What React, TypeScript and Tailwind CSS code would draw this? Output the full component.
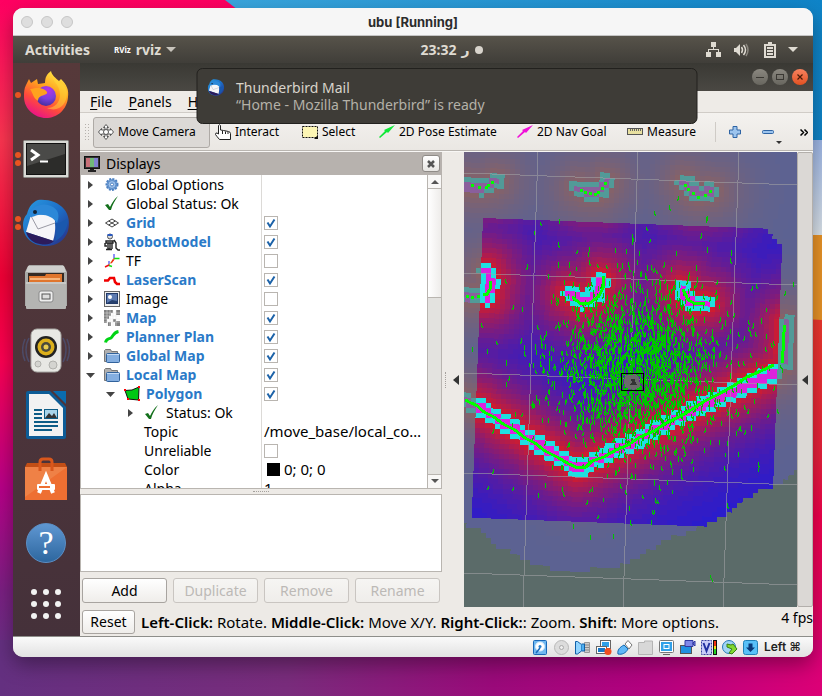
import React from "react";

type Pt = [number, number];

/* ---------- costmap view ---------- */

const WALLS: Pt[][] = [
  [[2, 34], [18, 35], [26, 33], [32, 29]],
  [[115, 36], [123, 40], [132, 41], [137, 37], [142, 30]],
  [[221, 30], [226, 37], [235, 42], [247, 39]],
  [[22, 119], [27, 130], [23, 146]],
  [[106, 142], [119, 150], [133, 142], [137, 128]],
  [[218, 137], [223, 147], [232, 152], [242, 151]],
  [[0, 248], [16, 256], [63, 285], [114, 317], [163, 293], [229, 258], [309, 221]],
  [[323, 172], [322, 210]],
  [[1, 144], [14, 144]],
];

const FRONTIER: Pt[] = [
  [-20, 368], [0, 371], [20, 381], [36, 396], [60, 406], [74, 414], [101, 420], [121, 420], [126, 416],
  [151, 415], [176, 406], [191, 394], [216, 383], [238, 374], [262, 363], [276, 351], [300, 337],
  [313, 333], [333, 317], [360, 300],
];

const SCANS: string[] = [
  "M1 248l6 3 5 2 8 7 10 5 9 7 12 6 10 8 10 5 10 8 12 6 12 7 9 4 8-1 6-6 12-4 12-7 12-5 12-8 14-6 12-8 13-6 12-7 14-9 14-7 14-8 14-9 14-6 13-6",
  "M108 145l8 6 10 0 9-7 4-8 0-12",
  "M219 137l5 11 8 4 9-1",
  "M27 129l-1 8-4 7",
  "M321 173l-2 14 0 12-1 12",
];

const DOTS: Pt[] = [
  [8, 33], [15, 35], [22, 35], [24, 33], [28, 30], [117, 38], [121, 40], [126, 41], [131, 42], [134, 40], [138, 36],
  [141, 31], [221, 33], [224, 37], [229, 41], [234, 45], [241, 43], [246, 39], [3, 144], [8, 145], [14, 144], [2, 248], [20, 142],
];

function segmentDistance(x: number, y: number, a: Pt, b: Pt) {
  const dx = b[0] - a[0];
  const dy = b[1] - a[1];
  const t = Math.max(0, Math.min(1, ((x - a[0]) * dx + (y - a[1]) * dy) / (dx * dx + dy * dy)));
  return Math.hypot(x - a[0] - t * dx, y - a[1] - t * dy);
}

function wallDistance(x: number, y: number) {
  let best = 999;
  for (const w of WALLS) {
    for (let i = 1; i < w.length; i++) best = Math.min(best, segmentDistance(x, y, w[i - 1], w[i]));
  }
  return best;
}

function frontierY(x: number) {
  for (let i = 1; i < FRONTIER.length; i++) {
    const a = FRONTIER[i - 1];
    const b = FRONTIER[i];
    if (x <= b[0]) return a[1] + ((x - a[0]) / (b[0] - a[0])) * (b[1] - a[1]);
  }
  return 300;
}

const LEVELS = 28;
const CELL = 5;
const ANGLE = 2.15;

function mix(a: number[], b: number[], t: number) {
  return "rgb(" + a.map((v, i) => Math.round(v + (b[i] - v) * t)).join(",") + ")";
}

function buildCells() {
  const paths: Record<string, string> = {};
  const c = Math.cos((ANGLE * Math.PI) / 180);
  const s = Math.sin((ANGLE * Math.PI) / 180);
  for (let i = -8; i < 66; i++) {
    for (let j = -18; j < 76; j++) {
      const u = (i + 0.5) * CELL;
      const v = (j + 0.5) * CELL;
      const x = 19 + u * c - v * s;
      const y = 66 + u * s + v * c;
      if (y > frontierY(x)) continue;
      const corner = i > 59 - Math.max(0, 3 - j);
      const local = i >= 0 && i < 60 && j >= 0 && j < 60 && !corner;
      const d = wallDistance(x, y);
      let fill: string;
      if (d < 4) fill = local ? "#dc22dc" : "#8a5f9c";
      else if (d < 8.5) fill = local ? "#1fe0e0" : "#529a98";
      else {
        const spread = local ? 38 : 26;
        const t = Math.round(Math.exp(-(d - 8.5) / spread) * LEVELS) / LEVELS;
        fill = local ? mix([30, 28, 216], [206, 28, 48], t) : mix([90, 98, 148], [134, 98, 104], t);
      }
      paths[fill] = (paths[fill] || "") + `M${i * CELL} ${j * CELL}h5v5h-5z`;
    }
  }
  return Object.entries(paths);
}

function buildParticles() {
  let seed = 20231;
  const rnd = () => {
    seed = (seed * 1664525 + 1013904223) % 4294967296;
    return seed / 4294967296;
  };
  const gauss = () => Math.sqrt(-2 * Math.log(rnd() + 1e-9)) * Math.cos(2 * Math.PI * rnd());
  let d = "";
  for (let i = 0; i < 2500; i++) {
    const wide = i % 4 === 0;
    const x = Math.round(174 + gauss() * (wide ? 62 : 37)) + 0.5;
    const y = Math.round(214 + gauss() * (wide ? 64 : 38));
    const lean = Math.round(rnd() * 2 - 1);
    const len = 2 + Math.round(rnd() * 2);
    if (x < 4 || x > 330 || y < 40) continue;
    d += `M${x} ${y}v${len}h${lean}v2`;
  }
  return d;
}

const CELLS = buildCells();
const PARTICLES = buildParticles();

function MapView() {
  return (
    <svg
      viewBox="0 0 333 455"
      preserveAspectRatio="xMidYMid slice"
      shapeRendering="crispEdges"
      className="block h-full min-w-0 flex-1 bg-[#5b6b69]"
      role="img"
      aria-label="Robot costmap view"
    >
      <g transform={`translate(19 66) rotate(${ANGLE})`}>
        {CELLS.map(([fill, d]) => (
          <path key={fill} d={d} fill={fill} />
        ))}
      </g>
      <path
        d="M74 0L59 455M174 0L159 455M275 0L259 455M0 21L333 33M0 121L333 133M0 221L333 233M0 321L333 333M0 421L333 433"
        stroke="#a0a0a4"
        strokeOpacity="0.6"
        fill="none"
      />
      <path d={PARTICLES} stroke="#00c400" fill="none" />
      {SCANS.map((d) => (
        <path key={d} d={d} stroke="#00ff00" strokeWidth="3" fill="none" />
      ))}
      {DOTS.map(([x, y]) => (
        <rect key={x + "-" + y} x={x - 1} y={y - 1} width="3" height="3" fill="#00ff00" />
      ))}
      <path d="M161 223h7l2-2 5 4 1 10-6 3-8-2-2-5z" fill="#6a6a6a" />
      <path d="M167 227h4v2l2 4h-7l2-3z" fill="#333" />
      <rect x="157.500" y="221.500" width="22" height="17" fill="none" stroke="#000" />
      <path d="M246 423l1 3 2 4" stroke="#00c400" fill="none" />
    </svg>
  );
}

/* ---------- wallpaper ---------- */

function Wallpaper() {
  return (
    <svg className="absolute inset-0 h-full w-full" viewBox="0 0 822 696" preserveAspectRatio="none" aria-hidden="true">
      <defs>
        <linearGradient id="wl" x1="0" y1="0" x2="0" y2="1">
          <stop offset="0" stopColor="#ff0062" />
          <stop offset="0.2" stopColor="#fb3550" />
          <stop offset="0.4" stopColor="#f00036" />
          <stop offset="0.52" stopColor="#fb0052" />
          <stop offset="0.7" stopColor="#b80088" />
          <stop offset="0.85" stopColor="#7a2082" />
          <stop offset="1" stopColor="#5b3a84" />
        </linearGradient>
        <linearGradient id="wb" x1="0" y1="0" x2="1" y2="0">
          <stop offset="0" stopColor="#643080" />
          <stop offset="0.35" stopColor="#792c7c" />
          <stop offset="0.6" stopColor="#9a0a7a" />
          <stop offset="0.8" stopColor="#b4007e" />
          <stop offset="1" stopColor="#dc0076" />
        </linearGradient>
        <linearGradient id="wt" x1="0" y1="0" x2="1" y2="0">
          <stop offset="0" stopColor="#3aa6de" />
          <stop offset="1" stopColor="#0f84c8" />
        </linearGradient>
        <linearGradient id="ws" x1="0" y1="0" x2="0" y2="1">
          <stop offset="0" stopColor="#9db6e6" />
          <stop offset="1" stopColor="#dfe6ea" />
        </linearGradient>
        <linearGradient id="wr" x1="0" y1="0" x2="0" y2="1">
          <stop offset="0" stopColor="#ef3c2c" />
          <stop offset="0.4" stopColor="#e8203c" />
          <stop offset="0.55" stopColor="#f2004e" />
          <stop offset="1" stopColor="#dc0076" />
        </linearGradient>
      </defs>
      <rect width="822" height="696" fill="url(#wl)" />
      <path d="M225 0H822V150H420Z" fill="url(#wt)" />
      <rect x="500" y="140" width="322" height="100" fill="url(#ws)" />
      <rect x="500" y="235" width="322" height="85" fill="#e99327" />
      <path d="M500 300L822 320V696H500Z" fill="url(#wr)" />
      <rect y="640" width="822" height="56" fill="url(#wb)" />
    </svg>
  );
}

/* ---------- dock ---------- */

function Firefox() {
  return (
    <svg width="46" height="48" viewBox="0 0 46 48">
      <defs>
        <linearGradient id="ff" x1="0.8" y1="0" x2="0.3" y2="1">
          <stop offset="0" stopColor="#fff04a" />
          <stop offset="0.4" stopColor="#ffa01e" />
          <stop offset="0.7" stopColor="#ff4a3c" />
          <stop offset="1" stopColor="#e8108c" />
        </linearGradient>
        <radialGradient id="fg" cx="0.6" cy="0.2" r="0.9">
          <stop offset="0" stopColor="#b833e8" />
          <stop offset="0.5" stopColor="#7a40dc" />
          <stop offset="1" stopColor="#3c2a90" />
        </radialGradient>
      </defs>
      <path d="M3 14l3-6 2 4 6-4 1 5 7-1c0-6 2-9 6-12 1 5 5 7 8 10l2-2c6 6 8 11 7 18-1 13-11 21-22 21S1 38 1 26c0-5 0-8 2-12z" fill="url(#ff)" />
      <path d="M29 3c-1 7 8 10 8 21 0 7-5 13-13 13 12 5 20-4 20-15 0-10-12-11-15-19z" fill="#ffd93a" opacity=".5" />
      <circle cx="23" cy="25" r="10" fill="url(#fg)" />
      <path d="M7 18c6-1 10-2 15 1 3 2 3 4-1 5-3 1-6 2-6 6-5-3-5-8-8-12z" fill="#ffa21e" />
    </svg>
  );
}

function Terminal() {
  return (
    <svg width="46" height="38" viewBox="0 0 46 38">
      <rect x="0.500" y="0.500" width="45" height="37" rx="1" fill="#d9d9d5" stroke="#8a8a86" />
      <rect x="3.500" y="3.500" width="39" height="31" fill="#2c2c2a" stroke="#111" />
      <path d="M4 4h38v10L4 26z" fill="#4a4a48" />
      <path d="M8 10l7 5-7 5" fill="none" stroke="#fff" strokeWidth="3" />
      <path d="M17 21.500h8" stroke="#fff" strokeWidth="2" />
    </svg>
  );
}

function Thunderbird({ size }: { size: number }) {
  return (
    <svg width={size} height={size} viewBox="0 0 48 48">
      <defs>
        <linearGradient id="tb" x1="0" y1="0" x2="1" y2="1">
          <stop offset="0" stopColor="#2a9be0" />
          <stop offset="0.5" stopColor="#1c6ec8" />
          <stop offset="1" stopColor="#2a2a80" />
        </linearGradient>
      </defs>
      <path d="M16 1c10-1 20 2 26 9 5 6 6 14 4 22-3 9-11 15-22 15C10 47 1 38 1 26c0-4 1-8 4-11 2-8 6-12 11-14z" fill="url(#tb)" />
      <path d="M9 16l22-1c3 6 3 17 0 27L4 33z" fill="#f6f6f8" />
      <path d="M9 17l7 13 17-6" fill="none" stroke="#9a9aa4" />
      <path d="M4 33l28 9c-4 4-9 4-14 3C11 44 6 40 4 33z" fill="#2c1c5c" />
      <path d="M7 16c2-9 15-14 24-8 7 4 6 11 4 16-4-6-11-9-19-8-4 1-8 4-9 0z" fill="#2c88d8" />
      <path d="M33 24c6 1 10-4 13-4 0 8-4 18-13 22 1-6 2-12 0-18z" fill="#1a58ae" />
      <circle cx="13" cy="13" r="2" fill="#123" />
    </svg>
  );
}

function Files() {
  return (
    <svg width="44" height="46" viewBox="0 0 44 46">
      <path d="M3 4l2-3h34l2 3 2 4v34H1V8z" fill="#a9a9a7" />
      <path d="M4 2h36l2 6H2z" fill="#cfcfcd" />
      <rect x="4" y="9" width="36" height="10" fill="#352a24" />
      <path d="M5 12h16l1-2h16v8H5z" fill="#e0762e" />
      <path d="M6 14h30v2H6z" fill="#f7b57c" />
      <rect x="2" y="18" width="40" height="27" rx="1" fill="#b4b4b2" />
      <path d="M2 19h40" stroke="#dcdcda" />
      <rect x="15" y="27" width="14" height="11" rx="2" fill="#eee" stroke="#888" />
      <rect x="18" y="30" width="8" height="5" fill="#ddd" stroke="#555" />
    </svg>
  );
}

function Rhythmbox() {
  return (
    <svg width="48" height="46" viewBox="0 0 48 46">
      <path d="M7 10c-4 7-4 17 0 24M3 11c-3 7-3 15 0 22M41 10c4 7 4 17 0 24M45 11c3 7 3 15 0 22" fill="none" stroke="#4c4a66" strokeWidth="1.500" />
      <rect x="9" y="1" width="30" height="43" rx="6" fill="#e8e8e4" stroke="#a8a8a4" />
      <circle cx="24" cy="19" r="11" fill="#222" />
      <circle cx="24" cy="19" r="8.500" fill="#dcb01c" />
      <circle cx="24" cy="19" r="5" fill="#4a4a3c" />
      <circle cx="24" cy="19" r="2.500" fill="#e8cc50" />
      <circle cx="16" cy="36" r="3" fill="#d4d4d0" stroke="#b0b0ac" />
      <circle cx="31" cy="37" r="4" fill="#d4d4d0" stroke="#b0b0ac" />
    </svg>
  );
}

function Writer() {
  return (
    <svg width="40" height="48" viewBox="0 0 40 48">
      <path d="M2 0h22l16 16v30a2 2 0 0 1-2 2H2a2 2 0 0 1-2-2V2a2 2 0 0 1 2-2z" fill="#0d5c96" />
      <path d="M27 0h13v13z" fill="#0a6cae" />
      <path d="M3 3h20l14 14v28H3z" fill="#f2f2f2" />
      <path d="M8 19h8M8 23h8M8 27h8M8 31h24M8 35h24M8 39h18" stroke="#0d5c86" strokeWidth="2" />
      <rect x="18.500" y="18.500" width="13" height="9" fill="#a8d4ea" stroke="#0d5c86" />
      <path d="M19 27l4-5 3 3 2-3 3 5z" fill="#333" />
    </svg>
  );
}

function Software() {
  return (
    <svg width="42" height="44" viewBox="0 0 42 44">
      <path d="M2 6h38l2 4H0z" fill="#c24e16" />
      <path d="M0 10h42v33H0z" fill="#ee6f32" />
      <path d="M0 10h42L0 40z" fill="#f0894e" opacity=".7" />
      <path d="M15 14V5q0-3 3-3h6q3 0 3 3v9" fill="none" stroke="#d9571c" strokeWidth="3" />
      <path d="M14 36l7-17 7 17" fill="none" stroke="#fff" strokeWidth="4" />
      <rect x="12" y="27" width="18" height="6" rx="1" fill="#fff" />
      <rect x="14" y="29" width="11" height="2" fill="#ee6f32" />
    </svg>
  );
}

function Help() {
  return (
    <span className="flex h-10 w-10 items-center justify-center rounded-full border border-[#5b8fc6] bg-linear-to-b from-[#5f97d2] to-[#2d679f] font-['Liberation_Serif',serif] text-[34px] leading-10 text-white">
      ?
    </span>
  );
}

function AppsGrid() {
  return (
    <svg width="30" height="30" viewBox="0 0 30 30" fill="#f2f2f2">
      {[3, 15, 27].map((y) => [3, 15, 27].map((x) => <circle key={x + "," + y} cx={x} cy={y} r="3" />))}
    </svg>
  );
}

const DOCK = [
  { label: "Firefox", icon: <Firefox />, open: 1 },
  { label: "Terminal", icon: <Terminal />, open: 2 },
  { label: "Thunderbird", icon: <Thunderbird size={48} />, open: 2 },
  { label: "Files", icon: <Files />, open: 0 },
  { label: "Rhythmbox", icon: <Rhythmbox />, open: 0 },
  { label: "LibreOffice Writer", icon: <Writer />, open: 0 },
  { label: "Ubuntu Software", icon: <Software />, open: 0 },
  { label: "Help", icon: <Help />, open: 0 },
];

function Dock() {
  return (
    <nav aria-label="Dock" className="flex w-[67px] shrink-0 flex-col bg-linear-to-b from-[#56393a] to-[#45313a]">
      {DOCK.map((d) => (
        <button key={d.label} aria-label={d.label} className="flex h-16 shrink-0 items-center">
          <span className="flex w-2 flex-col items-end gap-[2px]">
            {Array.from({ length: d.open }, (_, i) => (
              <span key={i} className="h-[6px] w-[6px] rounded-full bg-[#e95420]" />
            ))}
          </span>
          <span className="ml-px flex w-12 justify-center">{d.icon}</span>
        </button>
      ))}
      <button aria-label="Show Applications" className="flex h-[58px] items-center pl-[18px]">
        <AppsGrid />
      </button>
    </nav>
  );
}

/* ---------- displays tree ---------- */

const IconGear = () => (
  <svg width="16" height="16" viewBox="0 0 16 16">
    <circle cx="8" cy="7.500" r="5.500" fill="#7aa6dc" stroke="#4d80c0" strokeWidth="2" strokeDasharray="2 1.200" />
    <circle cx="8" cy="7.500" r="4" fill="#9cc0ea" stroke="#5a8cc8" />
    <circle cx="8" cy="7.500" r="1.500" fill="#fff" stroke="#4d80c0" />
  </svg>
);
const IconOk = () => (
  <svg width="16" height="16" viewBox="0 0 16 16">
    <path d="M1 9l3-1 2 3c2-4 4-8 8-11-3 5-6 9-7 14H5z" fill="#14701c" />
  </svg>
);
const IconGrid = () => (
  <svg width="16" height="16" viewBox="0 0 16 16" fill="none" stroke="#444">
    <path d="M1.500 8L8 4l6.500 4L8 12zM4.700 6l6.600 4M11.300 6l-6.600 4" />
  </svg>
);
const IconRobot = () => (
  <svg width="16" height="18" viewBox="0 0 16 18">
    <circle cx="6" cy="3.500" r="2.500" fill="#ddd" stroke="#555" />
    <path d="M3.500 2h5" stroke="#2a5ac0" strokeWidth="2" />
    <path d="M2 8h7v2H2zM1 10v3h2M4 10v6h2v-6M8 10v6M2 16.500h6M10 7l2 3v5l2 2h2" fill="none" stroke="#222" strokeWidth="1.400" />
  </svg>
);
const IconTf = () => (
  <svg width="16" height="16" viewBox="0 0 16 16" fill="none">
    <path d="M10 1v5M5 8v4" stroke="#2020f0" />
    <path d="M10 5.500h5.500M5 12.500l3 1" stroke="#10e010" strokeWidth="1.500" />
    <path d="M10 6l-3 4M5 12l-4 2" stroke="#f01010" strokeWidth="1.500" />
    <path d="M10 5.500l-5 6.500" stroke="#e0a020" strokeDasharray="2 1" />
  </svg>
);
const IconLaser = () => (
  <svg width="16" height="16" viewBox="0 0 16 16">
    <path d="M0 8.500h4l2-2.500h4l1 4 2 2h3" fill="none" stroke="#f00000" strokeWidth="2.500" />
  </svg>
);
const IconImage = () => (
  <svg width="16" height="16" viewBox="0 0 16 16">
    <rect x="0.500" y="0.500" width="15" height="15" fill="#eee" stroke="#666" />
    <rect x="2.500" y="2.500" width="11" height="10" fill="#5c7ab0" stroke="#223a68" />
    <circle cx="6" cy="6" r="2" fill="#fff" />
    <path d="M3 12l5-3 5 1v2z" fill="#26406e" />
  </svg>
);
const IconMap = () => (
  <svg width="16" height="16" viewBox="0 0 16 16">
    <path d="M0 0h9v3H7v3H5v3H3v4H0zM12 0h4v5h-4zM9 9h3v2h4v5h-5v-4H9zM4 12h3v4H4z" fill="#808080" />
    <path d="M0 3h16M0 6h16M0 9h16M0 12h16M3 0v16M6 0v16M9 0v16M12 0v16" stroke="#e4e4e4" strokeWidth=".5" />
  </svg>
);
const IconPlan = () => (
  <svg width="16" height="16" viewBox="0 0 16 16">
    <path d="M1.500 13.500c1-5 4-3 6-5s2-5 7-6" fill="none" stroke="#00d414" strokeWidth="3" />
  </svg>
);
const IconFolder = () => (
  <svg width="16" height="16" viewBox="0 0 16 16">
    <path d="M.5 13.500V2.500l1-1h5l1 2h6v10z" fill="#b0b0b0" stroke="#777" />
    <rect x="2.500" y="5.500" width="13" height="9" rx="1" fill="#84aee0" stroke="#31629c" />
    <path d="M3 6.500h12" stroke="#c4daf4" />
  </svg>
);
const IconPolygon = () => (
  <svg width="16" height="16" viewBox="0 0 16 16">
    <path d="M1 4.500l7-.5 7-3-.5 13L4 13z" fill="#00c814" stroke="#111" />
    <path d="M0 3h2v2H0zM14 0h2v2h-2zM14 13h2v2h-2zM3 12h2v2H3z" fill="#f00" />
  </svg>
);

type Row = {
  name: string;
  icon?: React.ReactNode;
  depth: 0 | 1 | 2 | 3;
  open?: boolean;
  bold?: boolean;
  check?: boolean;
  value?: React.ReactNode;
};

const ROWS: Row[] = [
  { name: "Global Options", icon: <IconGear />, depth: 0 },
  { name: "Global Status: Ok", icon: <IconOk />, depth: 0 },
  { name: "Grid", icon: <IconGrid />, depth: 0, bold: true, check: true },
  { name: "RobotModel", icon: <IconRobot />, depth: 0, bold: true, check: true },
  { name: "TF", icon: <IconTf />, depth: 0, check: false },
  { name: "LaserScan", icon: <IconLaser />, depth: 0, bold: true, check: true },
  { name: "Image", icon: <IconImage />, depth: 0, check: false },
  { name: "Map", icon: <IconMap />, depth: 0, bold: true, check: true },
  { name: "Planner Plan", icon: <IconPlan />, depth: 0, bold: true, check: true },
  { name: "Global Map", icon: <IconFolder />, depth: 0, bold: true, check: true },
  { name: "Local Map", icon: <IconFolder />, depth: 0, open: true, bold: true, check: true },
  { name: "Polygon", icon: <IconPolygon />, depth: 1, open: true, bold: true, check: true },
  { name: "Status: Ok", icon: <IconOk />, depth: 2 },
  { name: "Topic", depth: 3, value: "/move_base/local_co…" },
  { name: "Unreliable", depth: 3, check: false },
  {
    name: "Color",
    depth: 3,
    value: (
      <span className="flex items-center gap-1 pl-[3px]">
        <span className="h-[13px] w-[13px] bg-black" />
        0; 0; 0
      </span>
    ),
  },
  { name: "Alpha", depth: 3, value: "1" },
];

const INDENT = { 0: "pl-[5px]", 1: "pl-[25px]", 2: "pl-[45px]", 3: "pl-[63px]" };

function Twisty({ open }: { open?: boolean }) {
  return (
    <svg width="10" height="10" viewBox="0 0 10 10" fill="#444" className="shrink-0">
      {open ? <path d="M0 3h9L4.500 8z" /> : <path d="M2 1v8l5-4z" />}
    </svg>
  );
}

function Check({ label, checked }: { label: string; checked: boolean }) {
  return (
    <label className="relative block h-[14px] w-[14px]">
      <input
        type="checkbox"
        aria-label={label}
        defaultChecked={checked}
        className="peer block h-[14px] w-[14px] appearance-none border border-[#b9b5b0] bg-white"
      />
      <svg viewBox="0 0 14 14" className="pointer-events-none absolute inset-0 hidden h-[14px] w-[14px] peer-checked:block">
        <path d="M3.500 6.500l2.500 4L10.500 3.500" fill="none" stroke="#1c62a8" strokeWidth="2" />
      </svg>
    </label>
  );
}

function Tree() {
  return (
    <div className="flex min-h-0 flex-1 border border-t-0 border-[#b9b5b0] bg-white">
      <div role="tree" aria-label="Displays" className="min-w-0 flex-1 overflow-hidden">
        {ROWS.map((r) => (
          <div key={r.name} role="treeitem" className="flex h-[19px] items-stretch text-[14px] leading-[19px] whitespace-nowrap">
            <div className={"flex w-[181px] shrink-0 items-center border-r border-[#dcdad7] " + INDENT[r.depth]}>
              {r.depth < 3 && <Twisty open={r.open} />}
              {r.icon && <span className="mr-[6px] ml-2 flex w-4 shrink-0 items-center">{r.icon}</span>}
              <span className={r.bold ? "font-bold text-[#2a7ac8]" : ""}>{r.name}</span>
            </div>
            <div className="flex min-w-0 flex-1 items-center pl-[2px] text-[15px]">
              {r.check !== undefined && <Check label={r.name} checked={r.check} />}
              {r.value}
            </div>
          </div>
        ))}
      </div>
      <div className="flex w-[14px] shrink-0 flex-col border-l border-[#b9b5b0] bg-[#e3e2df]">
        <button aria-label="Scroll up" className="flex h-[14px] shrink-0 items-center justify-center border-b border-[#b9b5b0] bg-[#f8f7f6]">
          <svg width="8" height="5" viewBox="0 0 8 5" fill="#555"><path d="M0 5l4-4 4 4z" /></svg>
        </button>
        <div className="h-[109px] shrink-0 border-b border-[#b9b5b0] bg-linear-to-r from-white to-[#eeecea]" />
        <div className="flex-1" />
        <button aria-label="Scroll down" className="flex h-[14px] shrink-0 items-center justify-center border-t border-[#b9b5b0] bg-[#f8f7f6]">
          <svg width="8" height="5" viewBox="0 0 8 5" fill="#555"><path d="M0 0l4 4 4-4z" /></svg>
        </button>
      </div>
    </div>
  );
}

function PanelButton({ label, disabled }: { label: string; disabled?: boolean }) {
  return (
    <button
      disabled={disabled}
      className="h-[25px] flex-1 rounded-[3px] border border-[#a8a4a0] bg-linear-to-b from-white to-[#efedea] text-[14px] leading-[22px] text-black disabled:border-[#c9c5c1] disabled:from-[#f6f5f3] disabled:text-[#bcb9b6]"
    >
      {label}
    </button>
  );
}

function DisplaysPanel() {
  return (
    <section aria-label="Displays" className="flex w-[362px] shrink-0 flex-col">
      <header className="flex h-[23px] shrink-0 items-center bg-[#b7b2ae] pr-[2px] pl-1">
        <svg width="16" height="16" viewBox="0 0 16 16">
          <rect x="0.500" y="0.500" width="15" height="12" fill="#333" stroke="#111" />
          <path d="M2 2h4v9H2z" fill="#c87078" />
          <path d="M6 2h4v9H6z" fill="#70b878" />
          <path d="M10 2h4v9h-4z" fill="#8080d0" />
          <path d="M6 13h4v1h2v2H4v-2h2z" fill="#222" />
        </svg>
        <h2 className="ml-[6px] flex-1 text-[14px] leading-[22px]">Displays</h2>
        <button aria-label="Close panel" className="flex h-[17px] w-[18px] items-center justify-center rounded-[3px] border border-[#8f8b87] bg-linear-to-b from-white to-[#e8e6e3]">
          <svg width="8" height="8" viewBox="0 0 8 8"><path d="M1 1l6 6M7 1L1 7" stroke="#555" strokeWidth="2.500" /></svg>
        </button>
      </header>
      <Tree />
      <div className="flex h-[5px] shrink-0 items-center justify-center">
        <span className="w-4 border-t border-dotted border-[#a5a19d]" />
      </div>
      <div className="h-[78px] shrink-0 border border-[#b9b5b0] bg-white" />
      <div className="flex shrink-0 gap-[6px] px-[2px] pt-[6px] pb-1">
        <PanelButton label="Add" />
        <PanelButton label="Duplicate" disabled />
        <PanelButton label="Remove" disabled />
        <PanelButton label="Rename" disabled />
      </div>
    </section>
  );
}

/* ---------- toolbar ---------- */

const MoveIcon = () => (
  <svg width="16" height="16" viewBox="0 0 16 16" fill="#fff" stroke="#555">
    <path d="M8 .5l2.500 3H9v2.500h3.500V4.500L15.500 8l-3 3.500V10H9v2.500h1.500L8 15.500l-2.500-3H7V10H3.500v1.500L.5 8l3-3.500V6H7V3.500H5.500z" />
    <circle cx="8" cy="8" r="2.500" />
  </svg>
);
const HandIcon = () => (
  <svg width="16" height="16" viewBox="0 0 16 16" fill="#fff" stroke="#222">
    <path d="M3.500 10V1.500q1-1.500 2 0V6l3 .5 2.500.5 2.500.5q2 .5 2 2V15.500H4.500L2 12.500.5 10.500q0-2 1.500-1.500z" />
    <path d="M7.500 7v3M10.500 7.500V10M13 8v2" />
  </svg>
);
const SelectIcon = () => (
  <svg width="16" height="14" viewBox="0 0 16 14">
    <rect x="0.500" y="1.500" width="15" height="11" fill="#fdf6b4" stroke="#111" strokeDasharray="2 1" />
    <path d="M12 14h4v-4z" fill="#111" />
  </svg>
);
const ArrowIcon = ({ color }: { color: string }) => (
  <svg width="16" height="14" viewBox="0 0 16 14" fill={color}>
    <path d="M0 12L6 6 5 5 16 0 9 8 8 7l-7 6z" />
  </svg>
);
const RulerIcon = () => (
  <svg width="16" height="8" viewBox="0 0 16 8">
    <rect x="0.500" y="0.500" width="15" height="6" fill="#e8e0a0" stroke="#555" />
    <path d="M3.500 1v2M5.500 1v2M7.500 1v2M9.500 1v2M11.500 1v2M13.500 1v2" stroke="#666" />
  </svg>
);

const TOOLS = [
  { label: "Interact", icon: <HandIcon />, width: "w-[87px]" },
  { label: "Select", icon: <SelectIcon />, width: "w-[77px]" },
  { label: "2D Pose Estimate", icon: <ArrowIcon color="#10e838" />, width: "w-[138px]" },
  { label: "2D Nav Goal", icon: <ArrowIcon color="#f010d8" />, width: "w-[110px]" },
  { label: "Measure", icon: <RulerIcon />, width: "w-[93px]" },
];

function Toolbar() {
  return (
    <div role="toolbar" className="flex h-[38px] shrink-0 items-center overflow-hidden border-t border-[#d0ccc7] bg-linear-to-b from-[#f4f2ef] to-[#eae7e3] pt-px pl-1 text-[12px] leading-4 whitespace-nowrap">
      <span className="mr-[3px] h-[18px] w-[6px] shrink-0 bg-[radial-gradient(#b5b1ac_30%,transparent_40%)] bg-size-[3px_3px]" />
      <button className="flex h-[31px] w-[117px] shrink-0 items-center gap-1 rounded-[3px] border border-[#aeaaa6] bg-[#dcd9d6] pl-1">
        <MoveIcon />
        Move Camera
      </button>
      {TOOLS.map((t) => (
        <button key={t.label} className={"flex shrink-0 items-center gap-1 pl-[5px] " + t.width}>
          {t.icon}
          {t.label}
        </button>
      ))}
      <span className="h-5 w-px shrink-0 bg-[#cfcbc6]" />
      <button aria-label="Add tool" className="ml-[13px] shrink-0">
        <svg width="12" height="12" viewBox="0 0 12 12"><path d="M4 .5h4V4h3.500v4H8v3.500H4V8H.5V4H4z" fill="#9cc4ee" stroke="#2f64a4" /></svg>
      </button>
      <button aria-label="Remove tool" className="ml-[21px] shrink-0">
        <svg width="20" height="24" viewBox="0 0 20 24">
          <rect x="0.500" y="10.500" width="11" height="3" rx="1" fill="#9cc4ee" stroke="#2f64a4" />
          <path d="M14 21h6l-3 3z" fill="#333" />
        </svg>
      </button>
      <span className="flex-1" />
      <button aria-label="More tools" className="mr-[5px] shrink-0">
        <svg width="8" height="7" viewBox="0 0 8 7" fill="none" stroke="#000" strokeWidth="1.500"><path d="M.5.500l3 3-3 3M4.500.500l3 3-3 3" /></svg>
      </button>
    </div>
  );
}

/* ---------- virtual machine status icons ---------- */

const VM_ICONS = [
  { label: "Hard disk", art: <><rect x=".5" y=".5" width="13" height="14" rx="1" fill="#70b8f0" stroke="#1868b8" /><circle cx="7" cy="6.500" r="4.500" fill="#fff" stroke="#d8ecfc" /><circle cx="7" cy="6.500" r="1.500" fill="#2080d0" /><path d="M3 13l4-5" stroke="#1868b8" strokeWidth="1.500" /></> },
  { label: "Optical drive", art: <><circle cx="7.500" cy="7.500" r="7" fill="#dcdcdc" stroke="#b8b8b8" /><circle cx="7.500" cy="7.500" r="2" fill="#eee" stroke="#aaa" /></> },
  { label: "Audio", art: <><path d="M9.500 2.500h5v10h-5z" fill="#ccc" stroke="#999" /><path d="M10 5h4M10 7.500h4M10 10h4" stroke="#888" /><path d="M.5 1.500h2l4 3V11l-4 3h-2z" fill="#90d4ff" stroke="#1060a8" /><path d="M6.500 4h3v7h-3" fill="#50b0f0" stroke="#1060a8" /></> },
  { label: "Network", art: <><rect x="4.500" y=".5" width="10" height="8" fill="#fff" stroke="#666" /><rect x="6" y="2" width="7" height="5" fill="#30a0e8" /><rect x=".5" y="6.500" width="10" height="7" fill="#fff" stroke="#666" /><rect x="2" y="8" width="7" height="4" fill="#1878c8" /><circle cx="12" cy="11.500" r="3.500" fill="#f05020" /></> },
  { label: "USB", art: <><path d="M1 14c-1-4 2-7 6-9l4 4c-2 4-6 6-10 5z" fill="#60b8f8" stroke="#1068b0" /><path d="M8 4l3-3.500L15 5l-3 4z" fill="#fff" stroke="#777" /></> },
  { label: "Shared folders", art: <path d="M.5 14.500v-12h6v-1.500h8v13.500z" fill="#d8d8d8" stroke="#b4b4b4" /> },
  { label: "Display", art: <><rect x=".5" y=".5" width="14" height="12" rx="1" fill="#fff" stroke="#777" /><rect x="2" y="2" width="11" height="9" fill="#30a0e8" /><rect x="5" y="4.500" width="5" height="4" fill="#30a0e8" stroke="#fff" /><path d="M4 14.500h7" stroke="#666" /></> },
  { label: "Recording", art: <><rect x=".5" y="5.500" width="11" height="8" fill="#2090e0" stroke="#555" /><path d="M5 .5h8v6H5zM13 3l2-2v5l-2-2z" fill="#8088e8" stroke="#3038a0" /></> },
  { label: "Features", art: <><rect x=".5" y=".5" width="10" height="14" fill="#c8ccf8" stroke="#3840a0" strokeDasharray="2 1" /><path d="M2.500 3l3 8 3-8" fill="none" stroke="#2030a0" strokeWidth="2" /><rect x="12" y="0" width="4" height="15" fill="#111" /><rect x="13" y="1" width="2" height="5" fill="#f03010" /><rect x="13" y="6" width="2" height="3" fill="#f0e010" /><rect x="13" y="9" width="2" height="5" fill="#20d020" /></> },
  { label: "Mouse integration", art: <><circle cx="7" cy="7" r="6.500" fill="#a0d4f4" stroke="#2878b8" /><path d="M5 4l4 1 2-1 4 5-5 5-3-1 3-4-5-2z" fill="#80d830" stroke="#388010" /></> },
  { label: "Host key", art: <><rect x=".5" y=".5" width="14" height="14" rx="2" fill="#58c0f8" stroke="#2080b8" /><path d="M5.500 3.500h4v4H12l-4.500 4.500L3 7.500h2.500z" fill="#083878" /></> },
];

export default function App() {
  return (
    <div className="relative flex h-screen w-full flex-col overflow-hidden pt-2 pr-[9px] pb-[39px] pl-[13px] font-['Noto_Sans','Open_Sans',sans-serif] text-black">
      <Wallpaper />
      <div className="relative flex min-h-0 flex-1 flex-col overflow-hidden rounded-[10px] bg-[#edeae6] shadow-[0_8px_20px_rgba(0,0,0,0.35)]">
        <header className="grid h-7 shrink-0 grid-cols-[1fr_auto_1fr] items-center border-b border-[#c4c4c4] bg-[#f6f6f6] px-2">
          <div className="flex gap-2">
            {["Close", "Minimize", "Zoom"].map((l) => (
              <button key={l} aria-label={l} className="h-3 w-3 rounded-full border border-[#c6c6c6] bg-[#dedede]" />
            ))}
          </div>
          <h1 className="font-[Inter,sans-serif] text-[13px] leading-5 font-bold text-[#2c2c2c]">ubu [Running]</h1>
        </header>

        <div className="grid h-[27px] shrink-0 grid-cols-[1fr_auto_1fr] items-center bg-linear-to-b from-[#57534a] to-[#403e39] pr-[15px] pl-3 text-[14px] leading-5 font-bold text-[#dfdbd2]">
          <div className="flex items-center">
            <button>Activities</button>
            <button className="ml-6 flex items-center">
              <span className="mr-[5px] text-[8px] leading-4 text-white">RViz</span>
              rviz
              <svg width="10" height="5" viewBox="0 0 10 5" fill="#c8c4bc" className="ml-[5px]"><path d="M0 0h10L5 5z" /></svg>
            </button>
          </div>
          <div className="flex items-center gap-[5px] pl-20">
            <span>23:32</span>
            <span className="font-['DejaVu_Sans',sans-serif]">ر</span>
            <span className="h-2 w-2 rounded-full bg-[#d8d4cc]" />
          </div>
          <div className="flex items-center justify-end text-[#dfdbd2]">
            <svg width="15" height="15" viewBox="0 0 15 15" fill="currentColor"><path d="M5 0h5v5H8v2h5v3h2v5h-5v-5h2V8H3v2h2v5H0v-5h2V7h5V5H5z" /></svg>
            <svg width="15" height="14" viewBox="0 0 15 14" fill="currentColor" className="ml-[13px]"><path d="M0 5h2l4-4v12L2 9H0z" /><path d="M7.500 4q2 3 0 6M9.500 2q4 5 0 10" fill="none" stroke="currentColor" strokeWidth="1.500" /><path d="M12 1q4 6 0 12" fill="none" stroke="#8a867e" strokeWidth="1.500" /></svg>
            <svg width="12" height="16" viewBox="0 0 12 16" fill="none" stroke="currentColor" strokeWidth="2" className="ml-[15px]"><path d="M1 3h10v12H1zM4 1h4M3 6h6M3 9h6M3 12h6" /></svg>
            <svg width="10" height="5" viewBox="0 0 10 5" fill="currentColor" className="ml-3"><path d="M0 0h10L5 5z" /></svg>
          </div>
        </div>

        <div className="flex min-h-0 flex-1">
          <Dock />
          <main className="relative flex min-w-0 flex-1 flex-col">
            <div className="flex h-7 shrink-0 items-center justify-end gap-1 bg-linear-to-b from-[#3a3934] to-[#4a4843] pr-[5px]">
              <button aria-label="Minimize window" className="flex h-4 w-4 items-center justify-center rounded-full bg-linear-to-b from-[#8b8880] to-[#68665f]">
                <span className="h-px w-2 bg-[#3a3833]" />
              </button>
              <button aria-label="Maximize window" className="flex h-4 w-4 items-center justify-center rounded-full bg-linear-to-b from-[#8b8880] to-[#68665f]">
                <span className="h-[6px] w-2 border border-[#3a3833]" />
              </button>
              <button aria-label="Close window" className="flex h-4 w-4 items-center justify-center rounded-full bg-linear-to-b from-[#f7825e] to-[#e2501e]">
                <svg width="6" height="6" viewBox="0 0 6 6" stroke="#4a1c08" strokeWidth="1.200"><path d="M.5.500l5 5M5.500.500l-5 5" /></svg>
              </button>
            </div>
            <div role="menubar" className="flex h-[21px] shrink-0 items-center gap-4 bg-[#eeebe7] pl-[10px] text-[14px] leading-[21px]">
              {["File", "Panels", "Help"].map((m) => (
                <button key={m} role="menuitem">
                  <span className="underline underline-offset-2">{m[0]}</span>
                  {m.slice(1)}
                </button>
              ))}
            </div>
            <Toolbar />
            <div className="h-[2px] shrink-0 border-t border-[#b9b5b0] bg-[#f8f7f5]" />
            <div className="flex min-h-0 flex-1">
              <DisplaysPanel />
              <div className="flex w-[22px] shrink-0 items-center gap-[7px] pl-[3px]">
                <span className="h-4 border-l border-dotted border-[#a5a19d]" />
                <svg width="6" height="10" viewBox="0 0 6 10" fill="#333"><path d="M6 0v10L0 5z" /></svg>
              </div>
              <MapView />
              <div className="flex w-4 shrink-0 items-center justify-center rounded-[2px] border border-[#b3afab] bg-[#dbd8d5]">
                <svg width="6" height="10" viewBox="0 0 6 10" fill="#333"><path d="M6 0v10L0 5z" /></svg>
              </div>
            </div>
            <footer className="flex h-[29px] shrink-0 items-center gap-[6px] overflow-hidden pl-[2px] text-[14px] leading-5 whitespace-nowrap">
              <button className="h-6 w-[53px] rounded-[3px] border border-[#a8a4a0] bg-linear-to-b from-white to-[#efedea] leading-[22px]">
                Reset
              </button>
              <p className="min-w-0 flex-1 text-[15px]">
                <b className="font-semibold">Left-Click:</b> Rotate. <b className="font-semibold">Middle-Click:</b> Move X/Y.{" "}
                <b className="font-semibold">Right-Click:</b>: Zoom. <b className="font-semibold">Shift</b>: More options.
              </p>
              <span className="self-start pt-px">4 fps</span>
            </footer>
            <aside role="status" className="absolute top-[5px] left-1/2 flex h-14 w-[501px] -translate-x-1/2 gap-3 rounded-[6px] border border-[#22211e] bg-[#3e3c37] py-[10px] pl-[10px] text-[14px] leading-[17px] text-[#d8d4cb]">
              <Thunderbird size={17} />
              <div>
                <p>Thunderbird Mail</p>
                <p className="text-[#b4b1a8]">“Home - Mozilla Thunderbird” is ready</p>
              </div>
            </aside>
          </main>
        </div>

        <footer className="flex h-[21px] shrink-0 items-center justify-end gap-[5px] border-t border-[#8e8e8a] bg-linear-to-b from-[#fafafa] to-[#e2e2e2] pr-3">
          {VM_ICONS.map((v) => (
            <svg key={v.label} width="16" height="15" viewBox="0 0 16 15" role="img" aria-label={v.label}>
              {v.art}
            </svg>
          ))}
          <span className="font-[Inter,'DejaVu_Sans',sans-serif] text-[12px] leading-4 font-semibold text-[#222]">Left ⌘</span>
        </footer>
      </div>
    </div>
  );
}
